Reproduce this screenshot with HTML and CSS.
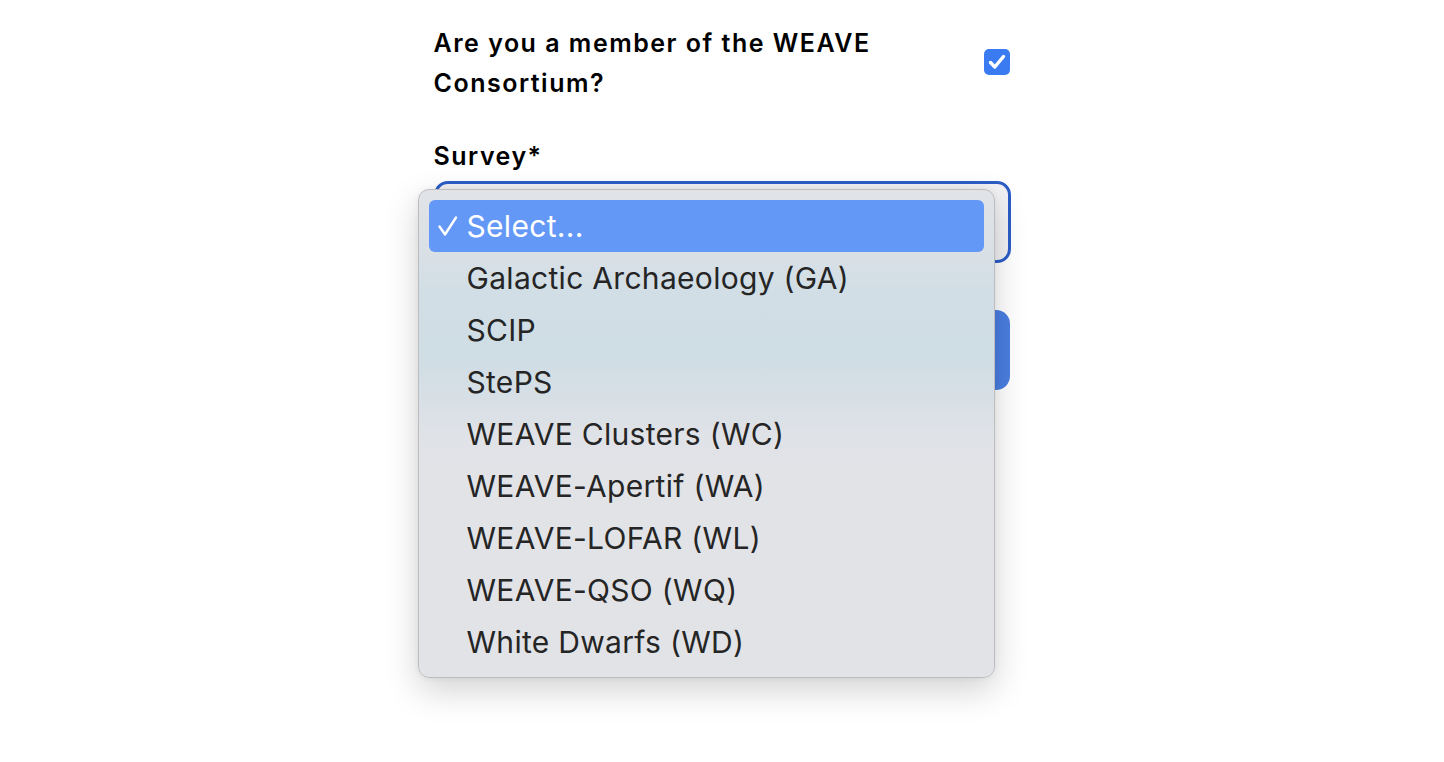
FILE: index.html
```html
<!DOCTYPE html>
<html lang="en">
<head>
<meta charset="utf-8">
<title>Survey</title>
<link rel="stylesheet" href="styles.css">
</head>
<body>
<div class="form">
  <div class="row">
    <label class="label">Are you a member of the WEAVE Consortium?</label>
    <span class="checkbox">
      <svg width="26" height="26" viewBox="0 0 26 26"><path d="M6.5 13.5 L10.8 18 L19.5 7.5" fill="none" stroke="#fff" stroke-width="3.4" stroke-linecap="round" stroke-linejoin="round"/></svg>
    </span>
  </div>
  <div class="field">
    <div class="label survey">Survey*</div>
    <div class="select"></div>
    <div class="button"></div>
    <div class="menu">
      <div class="item selected"><svg class="tick" width="40" height="52" viewBox="0 0 40 52"><path d="M10.5 26.5 L16 34.5 L27 17.5" fill="none" stroke="#fff" stroke-width="2.4" stroke-linecap="round" stroke-linejoin="round"/></svg>Select...</div>
      <div class="item">Galactic Archaeology (GA)</div>
      <div class="item">SCIP</div>
      <div class="item">StePS</div>
      <div class="item">WEAVE Clusters (WC)</div>
      <div class="item">WEAVE-Apertif (WA)</div>
      <div class="item">WEAVE-LOFAR (WL)</div>
      <div class="item">WEAVE-QSO (WQ)</div>
      <div class="item">White Dwarfs (WD)</div>
    </div>
  </div>
</div>
</body>
</html>
```

FILE: styles.css
```css
html, body {
  margin: 0;
  padding: 0;
  background: #ffffff;
}
html {
  height: 100%;
}
body {
  min-height: 762px;
  font-family: Inter, "Noto Sans", "Liberation Sans", sans-serif;
  color: #000;
}
.form {
  width: 577px;
  margin: 0 auto;
  padding-top: 23px;
}
.row {
  display: flex;
  align-items: center;
  justify-content: space-between;
}
.label {
  font-size: 25px;
  font-weight: 600;
  line-height: 40px;
  width: 470px;
  letter-spacing: 1.5px;
}
.checkbox {
  width: 26px;
  height: 26px;
  border-radius: 5px;
  background: #3a7bf2;
  display: flex;
  align-items: center;
  justify-content: center;
  margin-right: 1px;
  margin-top: -2px;
}
.field {
  position: relative;
  margin-top: 33px;
}
.survey {
  margin-bottom: 5px;
}
.select {
  height: 76px;
  border: 3px solid #2c5dc6;
  border-radius: 14px;
  background: #f2f2f4;
}
.button {
  margin-top: 47px;
  height: 80px;
  width: 576px;
  border-radius: 14px;
  background: #4a7ee2;
}
.menu {
  position: absolute;
  left: -16px;
  top: 53px;
  width: 555px;
  padding: 10px 10px 9px 10px;
  border: 1px solid #bdbdc0;
  border-radius: 11px;
  background: linear-gradient(to bottom, #e1e3e7 0%, #dbe1e6 10%, #d2dee5 20%, #cfdde4 34%, #d6dfe5 42%, #dfe2e7 50%, #e2e3e7 58%, #e2e3e7 100%);
  box-shadow: 0 12px 34px rgba(0, 0, 0, 0.18), 0 0 6px rgba(0, 0, 0, 0.06);
}
.item {
  height: 52px;
  line-height: 52px;
  padding-left: 38px;
  font-size: 30px;
  letter-spacing: 0.3px;
  font-weight: 400;
  color: #252525;
  position: relative;
  border-radius: 6px;
}
.item.selected {
  background: #6398f7;
  color: #ffffff;
}
.tick {
  position: absolute;
  left: 0;
  top: 0;
}
```
